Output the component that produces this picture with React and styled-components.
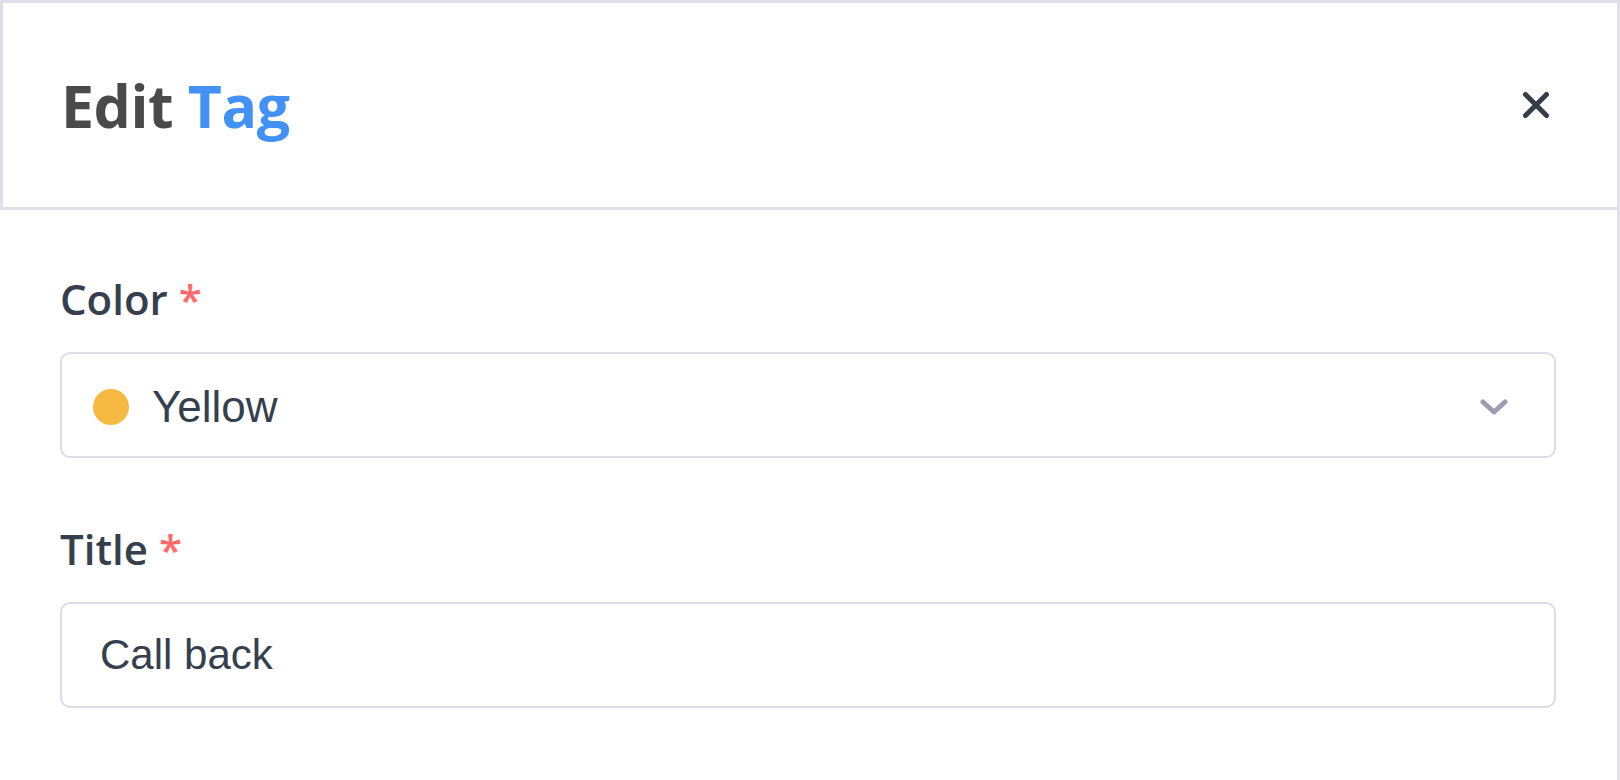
import styled, { createGlobalStyle } from "styled-components";

const GlobalStyle = createGlobalStyle`
  html, body {
    margin: 0;
    padding: 0;
    background: #ffffff;
  }
  * {
    box-sizing: border-box;
  }
`;

const Modal = styled.div`
  width: 1620px;
  height: 780px;
  display: flex;
  flex-direction: column;
  background: #fff;
  overflow: hidden;
`;

const Header = styled.div`
  height: 210px;
  flex-shrink: 0;
  display: flex;
  align-items: center;
  justify-content: space-between;
  padding: 0 67px 0 58px;
  border: 3px solid #dfdeea;
`;

const Title = styled.h1`
  margin: 0;
  font-family: "Open Sans", sans-serif;
  font-size: 59px;
  font-weight: 700;
  letter-spacing: -0.5px;
  line-height: 82px;
  color: #4a4a4a;

  span {
    color: #4291f5;
  }
`;

const CloseButton = styled.button`
  border: 0;
  background: none;
  padding: 0;
  width: 28px;
  height: 28px;
  display: flex;
  cursor: pointer;
`;

const Body = styled.div`
  flex: 1;
  padding: 60px 61px 0 60px;
  border-right: 3px solid #dfdeea;
  display: flex;
  flex-direction: column;
  gap: 62px;
`;

const Field = styled.div`
  display: flex;
  flex-direction: column;
  gap: 25px;
`;

const Label = styled.label`
  font-family: "Open Sans", sans-serif;
  font-size: 42px;
  font-weight: 600;
  line-height: 57px;
  color: #363f4d;

  em {
    font-style: normal;
    color: #ff6a6a;
  }
`;

const Box = styled.div`
  height: 106px;
  border: 2px solid #dddce9;
  border-radius: 10px;
  display: flex;
  align-items: center;
  padding: ${(p) => (p.$select ? "3px 46px 0 31px" : "0 38px")};
  font-family: "Liberation Sans", Arial, sans-serif;
  font-size: 42px;
  color: #363f4d;
`;

const Dot = styled.span`
  width: 36px;
  height: 36px;
  border-radius: 50%;
  background: ${(p) => p.$color};
  margin-right: 23px;
  flex-shrink: 0;
`;

const Value = styled.span`
  flex: 1;
  font-size: 44px;
`;

const Chevron = () => (
  <svg width="28" height="16" viewBox="0 0 28 16" fill="none">
    <path
      d="M3 3l11 10 11-10"
      stroke="#9b9db1"
      strokeWidth="5"
      strokeLinecap="round"
      strokeLinejoin="round"
    />
  </svg>
);

const CloseIcon = () => (
  <svg width="28" height="28" viewBox="0 0 28 28" fill="none">
    <path
      d="M3.5 3.5l21 21M24.5 3.5l-21 21"
      stroke="#363d4a"
      strokeWidth="5"
      strokeLinecap="round"
    />
  </svg>
);

export default function App() {
  return (
    <>
      <GlobalStyle />
      <Modal>
        <Header>
          <Title>
            Edit <span>Tag</span>
          </Title>
          <CloseButton aria-label="Close">
            <CloseIcon />
          </CloseButton>
        </Header>
        <Body>
          <Field>
            <Label>
              Color <em>*</em>
            </Label>
            <Box $select>
              <Dot $color="#f6b941" />
              <Value>Yellow</Value>
              <Chevron />
            </Box>
          </Field>
          <Field>
            <Label>
              Title <em>*</em>
            </Label>
            <Box>Call back</Box>
          </Field>
        </Body>
      </Modal>
    </>
  );
}
